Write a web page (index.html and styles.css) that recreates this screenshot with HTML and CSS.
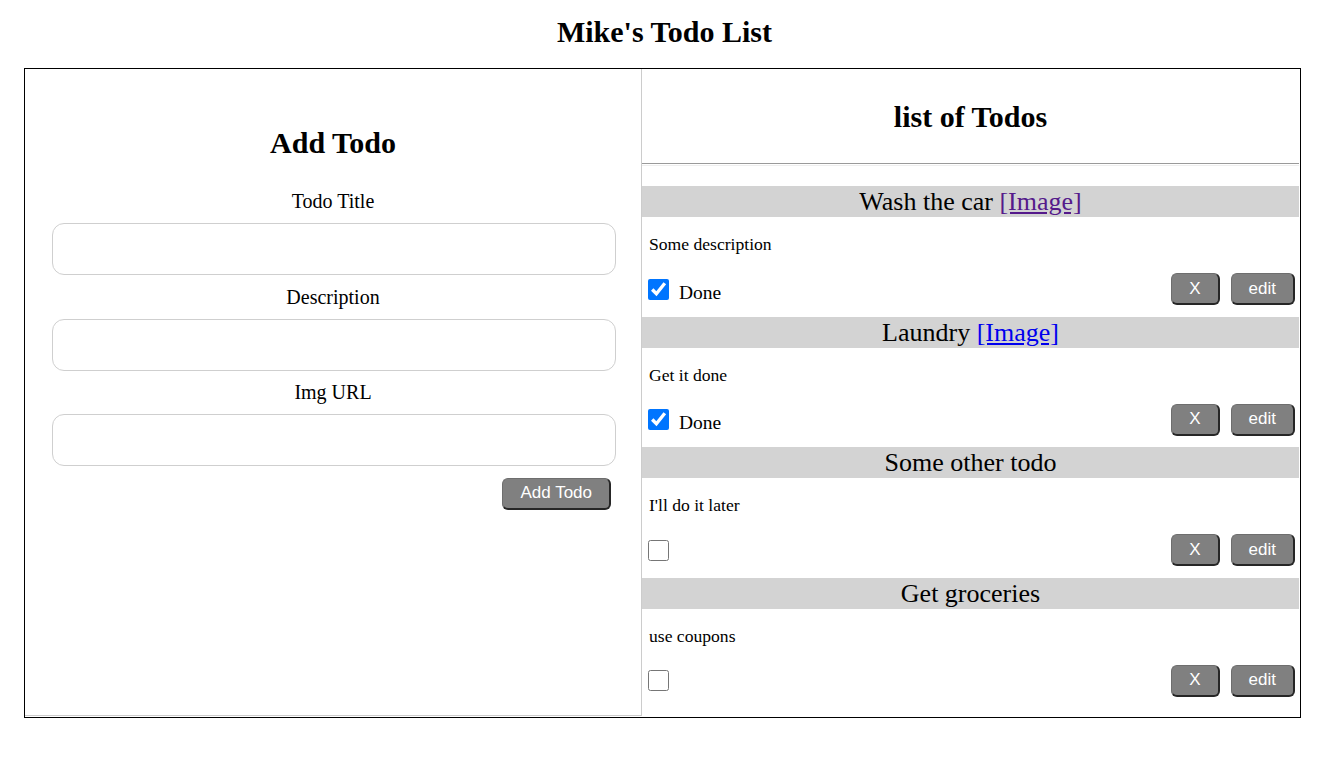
FILE: index.html
```html
<!DOCTYPE html>
<html>
<head>
<meta charset="utf-8">
<title>Mike's Todo List</title>
<link rel="stylesheet" href="styles.css">
</head>
<body>
<h2 class="page-title">Mike's Todo List</h2>
<div class="app">
  <div class="add-panel">
    <h2 class="panel-title add-title">Add Todo</h2>
    <label class="field-label">Todo Title</label>
    <input class="field-input" type="text">
    <label class="field-label">Description</label>
    <input class="field-input" type="text">
    <label class="field-label">Img URL</label>
    <input class="field-input" type="text">
    <div class="add-row">
      <button class="btn">Add Todo</button>
    </div>
  </div>
  <div class="list-panel">
    <div class="list-header">
      <h2 class="panel-title">list of Todos</h2>
    </div>
    <div class="rule"></div>
    <div class="todos">
      <div class="todo">
        <div class="todo-title">Wash the car <a class="img-link visited" href="#">[Image]</a></div>
        <p class="todo-desc">Some description</p>
        <div class="todo-controls">
          <label class="done"><input class="check" type="checkbox" checked><span>Done</span></label>
          <div class="actions"><button class="btn">X</button><button class="btn">edit</button></div>
        </div>
      </div>
      <div class="todo">
        <div class="todo-title">Laundry <a class="img-link" href="#">[Image]</a></div>
        <p class="todo-desc">Get it done</p>
        <div class="todo-controls">
          <label class="done"><input class="check" type="checkbox" checked><span>Done</span></label>
          <div class="actions"><button class="btn">X</button><button class="btn">edit</button></div>
        </div>
      </div>
      <div class="todo">
        <div class="todo-title">Some other todo</div>
        <p class="todo-desc">I'll do it later</p>
        <div class="todo-controls">
          <label class="done"><input class="check" type="checkbox"></label>
          <div class="actions"><button class="btn">X</button><button class="btn">edit</button></div>
        </div>
      </div>
      <div class="todo">
        <div class="todo-title">Get groceries</div>
        <p class="todo-desc">use coupons</p>
        <div class="todo-controls">
          <label class="done"><input class="check" type="checkbox"></label>
          <div class="actions"><button class="btn">X</button><button class="btn">edit</button></div>
        </div>
      </div>
    </div>
  </div>
</div>
</body>
</html>
```

FILE: styles.css
```css
html, body {
  margin: 0;
  padding: 0;
  background: #fff;
}
body {
  font-family: "Liberation Serif", "Times New Roman", serif;
  color: #000;
  font-size: 20px;
}
.page-title {
  margin: 0;
  padding-top: 15px;
  height: 33px;
  line-height: 33px;
  margin-bottom: 20px;
  text-align: center;
  font-size: 30px;
  font-weight: bold;
}
.app {
  display: flex;
  margin-left: 24px;
  width: 1277px;
  box-sizing: border-box;
  border: 1px solid #000;
}
.add-panel {
  width: 617px;
  box-sizing: border-box;
  border-right: 1px solid #ccc;
  border-bottom: 1px solid #ccc;
  margin-bottom: 1px;
  padding-top: 57px;
  display: flex;
  flex-direction: column;
}
.panel-title {
  margin: 0;
  text-align: center;
  font-size: 30px;
  font-weight: bold;
  line-height: 33px;
}
.add-title {
  margin-bottom: 31px;
}
.field-label {
  display: block;
  text-align: center;
  line-height: 22px;
  font-size: 20px;
}
.field-input {
  display: block;
  height: 52px;
  box-sizing: border-box;
  margin: 11px 25px 10.5px 27px;
  border: 1px solid #cfcfcf;
  border-radius: 12px;
  background: #fff;
  font-size: 16px;
  padding: 0 10px;
}
.add-row {
  display: flex;
  justify-content: flex-end;
  padding-right: 30px;
  margin-top: 1px;
}
.btn {
  font-family: "Liberation Sans", Arial, sans-serif;
  font-size: 17px;
  color: #fff;
  background: #808080;
  height: 32px;
  box-sizing: border-box;
  padding: 0 17px 1px 17px;
  border: 1px solid #6e6e6e;
  border-right: 2px solid #262626;
  border-bottom: 2px solid #262626;
  border-radius: 6px;
  line-height: 27px;
}
.list-panel {
  flex: 1;
  padding-right: 1px;
  padding-bottom: 8px;
}
.list-header {
  height: 94px;
  display: flex;
  align-items: center;
  justify-content: center;
}
.rule {
  border-top: 1px solid #9a9a9a;
  border-bottom: 1px solid #eeeeee;
  height: 1px;
  margin-bottom: 20px;
}
.todo-title {
  background: #d3d3d3;
  height: 31px;
  line-height: 31px;
  text-align: center;
  font-size: 26px;
}
.img-link {
  color: #0000ee;
  text-decoration: underline;
}
.img-link.visited {
  color: #551a8b;
}
.todo-desc {
  margin: 0;
  padding: 18px 7px 0;
  font-size: 17.6px;
  line-height: 18px;
}
.todo-controls {
  margin-top: 20px;
  margin-bottom: 11.67px;
  height: 32px;
  display: flex;
  align-items: center;
  justify-content: space-between;
  padding: 0 4px 0 6px;
}
.done {
  display: flex;
  align-items: center;
  gap: 10px;
  font-size: 19.5px;
}
.done span {
  padding-top: 7px;
}
.check {
  width: 21px;
  height: 21px;
  margin: 0;
}
.actions {
  display: flex;
  gap: 11px;
}
```
